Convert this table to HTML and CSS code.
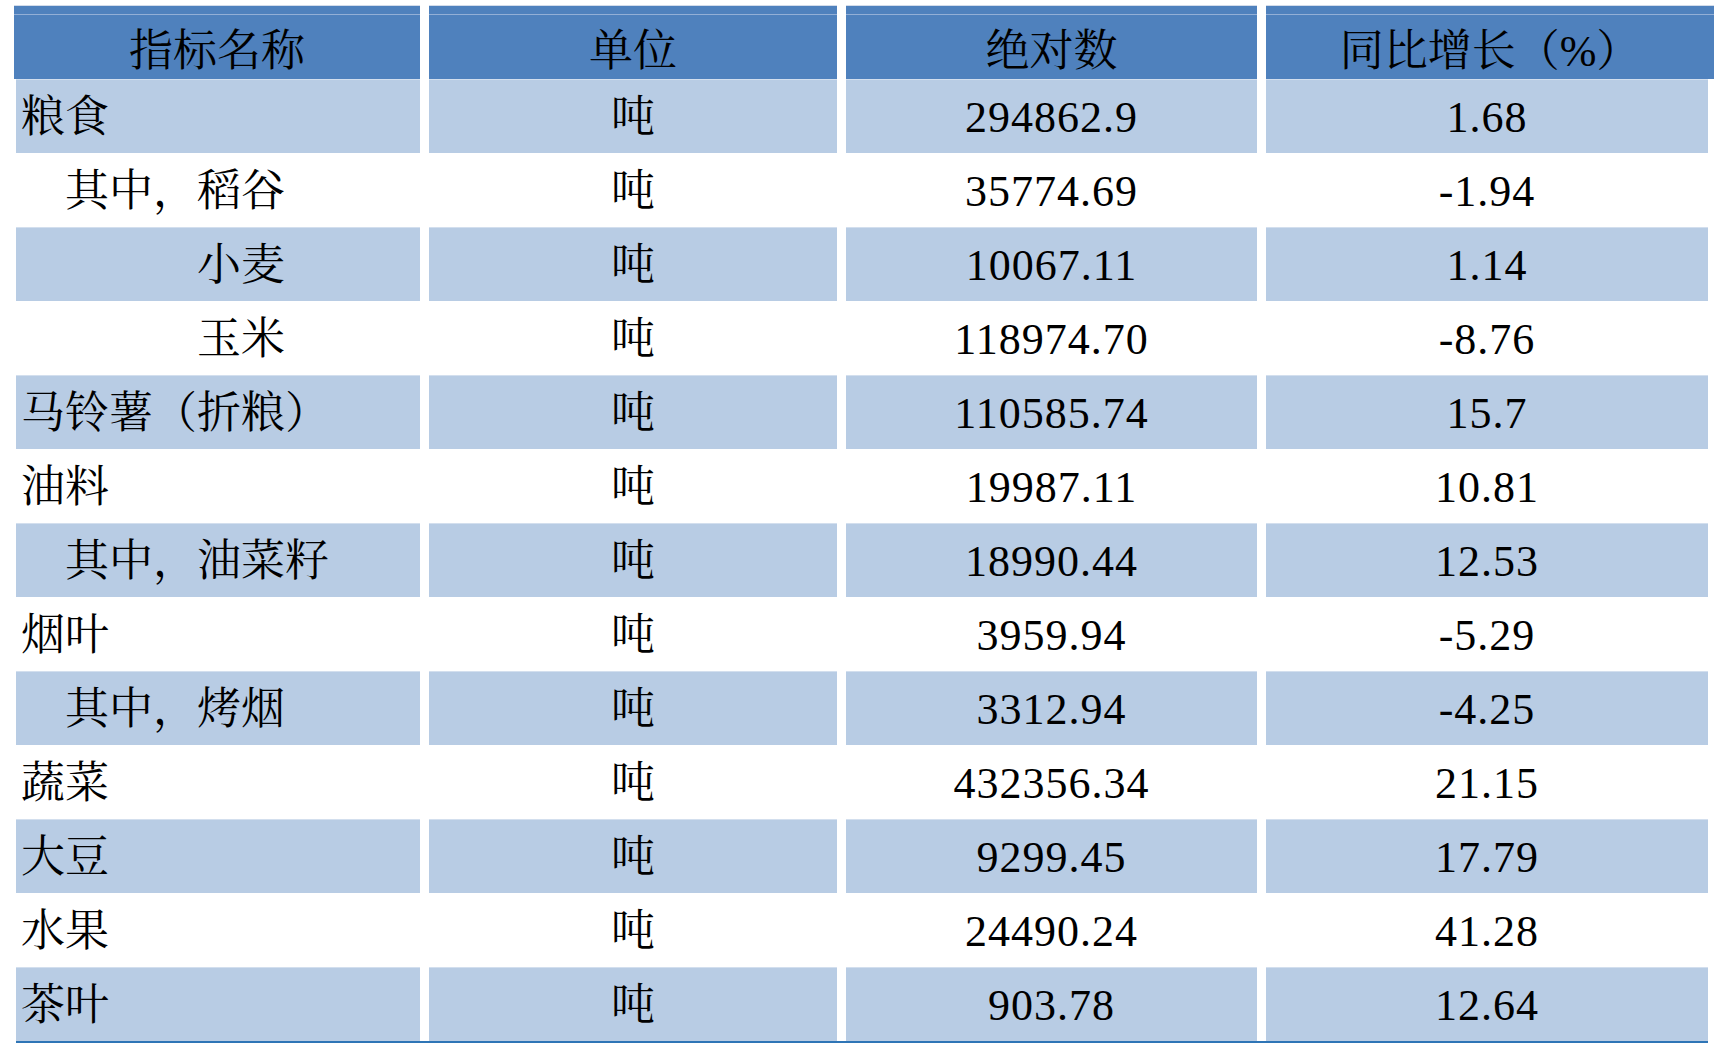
FILE: index.html
```html
<!DOCTYPE html>
<html lang="zh-CN">
<head>
<meta charset="utf-8">
<title>主要农产品产量</title>
<link rel="stylesheet" href="styles.css">
</head>
<body>
<div class="table">
  <div class="cell head first">指标名称</div>
  <div class="cell head">单位</div>
  <div class="cell head">绝对数</div>
  <div class="cell head last">同比增长（%）</div>

  <div class="cell name shade">粮食</div>
  <div class="cell shade">吨</div>
  <div class="cell shade num">294862.9</div>
  <div class="cell shade num">1.68</div>

  <div class="cell name ind1">其中，稻谷</div>
  <div class="cell">吨</div>
  <div class="cell num">35774.69</div>
  <div class="cell num">-1.94</div>

  <div class="cell name ind4 shade">小麦</div>
  <div class="cell shade">吨</div>
  <div class="cell shade num">10067.11</div>
  <div class="cell shade num">1.14</div>

  <div class="cell name ind4">玉米</div>
  <div class="cell">吨</div>
  <div class="cell num">118974.70</div>
  <div class="cell num">-8.76</div>

  <div class="cell name shade">马铃薯（折粮）</div>
  <div class="cell shade">吨</div>
  <div class="cell shade num">110585.74</div>
  <div class="cell shade num">15.7</div>

  <div class="cell name">油料</div>
  <div class="cell">吨</div>
  <div class="cell num">19987.11</div>
  <div class="cell num">10.81</div>

  <div class="cell name ind1 shade">其中，油菜籽</div>
  <div class="cell shade">吨</div>
  <div class="cell shade num">18990.44</div>
  <div class="cell shade num">12.53</div>

  <div class="cell name">烟叶</div>
  <div class="cell">吨</div>
  <div class="cell num">3959.94</div>
  <div class="cell num">-5.29</div>

  <div class="cell name ind1 shade">其中，烤烟</div>
  <div class="cell shade">吨</div>
  <div class="cell shade num">3312.94</div>
  <div class="cell shade num">-4.25</div>

  <div class="cell name">蔬菜</div>
  <div class="cell">吨</div>
  <div class="cell num">432356.34</div>
  <div class="cell num">21.15</div>

  <div class="cell name shade">大豆</div>
  <div class="cell shade">吨</div>
  <div class="cell shade num">9299.45</div>
  <div class="cell shade num">17.79</div>

  <div class="cell name">水果</div>
  <div class="cell">吨</div>
  <div class="cell num">24490.24</div>
  <div class="cell num">41.28</div>

  <div class="cell name shade">茶叶</div>
  <div class="cell shade">吨</div>
  <div class="cell shade num">903.78</div>
  <div class="cell shade num">12.64</div>

  <div class="rule"></div>
</div>
</body>
</html>
```
FILE: styles.css
```css
html, body {
  margin: 0;
  padding: 0;
  background: #ffffff;
}

body {
  width: 1714px;
  height: 1043px;
  overflow: hidden;
  font-family: "Liberation Serif", "Noto Serif CJK SC", "Noto Sans CJK SC", serif;
  color: #000000;
}

.table {
  display: grid;
  grid-template-columns: 404px 408px 411px 442px;
  grid-template-rows: repeat(14, 74px) 2px;
  column-gap: 9px;
  padding: 5px 0 0 16px;
  width: 1692px;
}

.cell {
  display: flex;
  align-items: center;
  justify-content: center;
  font-size: 44px;
  line-height: 1;
  white-space: nowrap;
  box-sizing: border-box;
  padding-top: 4px;
}

.head {
  background: linear-gradient(#4f81bd 0 8px, #93afd6 8px 9px, #4f81bd 9px);
  border-top: 1px solid #d3dcea;
  padding-top: 18px;
}

.head.first {
  margin-left: -2px;
}

.head.last {
  margin-right: -6px;
}

.name {
  justify-content: flex-start;
  padding-left: 5px;
}

.name.ind1 {
  padding-left: 49px;
}

.name.ind4 {
  padding-left: 181px;
}

.shade {
  background: #b8cce4;
  box-shadow: inset 0 1px 0 #d3dfee;
}

.num {
  letter-spacing: 1px;
}

.rule {
  grid-column: 1 / -1;
  background: #2e75b6;
}
```
